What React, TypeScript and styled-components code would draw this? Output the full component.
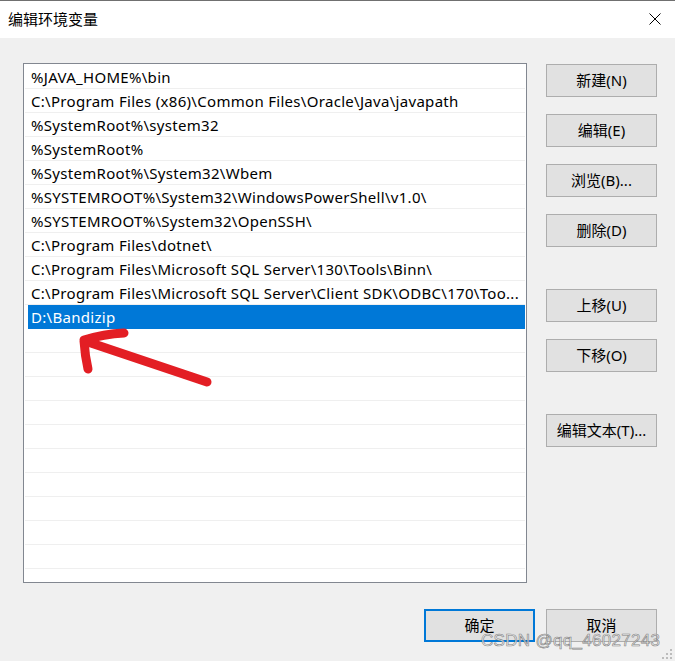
import React from "react";
import styled, { createGlobalStyle } from "styled-components";

const GlobalStyle = createGlobalStyle`
  html, body { margin: 0; padding: 0; background: #f0f0f0; }
  * { box-sizing: border-box; }
`;

const FONT = `"Noto Sans", "Noto Sans CJK SC", sans-serif`;

const Window = styled.div`
  position: relative;
  width: 675px;
  height: 661px;
  overflow: hidden;
  background: #f0f0f0;
  border-top: 1px solid #707070;
  font-family: ${FONT};
  font-size: 15px;
  color: #000;
`;

const TitleBar = styled.div`
  height: 37px;
  background: #fff;
  display: flex;
  align-items: center;
  justify-content: space-between;
  padding: 0 14px 0 8px;
`;

const Title = styled.div`
  font-size: 15px;
  line-height: 1;
  padding-bottom: 1px;
`;

const CloseIcon = styled.svg`
  width: 12px;
  height: 12px;
  margin-bottom: 1px;
`;

const Body = styled.div`
  padding: 25px 18px 0 23px;
`;

const Main = styled.div`
  display: flex;
  gap: 19px;
`;

const ListBox = styled.div`
  width: 504px;
  height: 520px;
  background: #fff;
  border: 1px solid #828790;
  padding: 1px;
  overflow: hidden;
`;

const Row = styled.div<{ $selected?: boolean }>`
  height: 24px;
  border-bottom: 1px solid #efefef;
  display: flex;
  align-items: center;
  white-space: nowrap;
  overflow: hidden;
  letter-spacing: 0.3px;
  padding-top: 2px;
  padding-left: ${(p) => (p.$selected ? "3px" : "6px")};
  margin-left: ${(p) => (p.$selected ? "3px" : "0")};
  background: ${(p) => (p.$selected ? "#0078d7" : "transparent")};
  color: ${(p) => (p.$selected ? "#fff" : "#000")};
  border-bottom-color: ${(p) => (p.$selected ? "#0078d7" : "#efefef")};
  line-height: 1;
`;

const ButtonColumn = styled.div`
  display: flex;
  flex-direction: column;
  gap: 42px;
  padding-top: 1px;
`;

const ButtonGroup = styled.div`
  display: flex;
  flex-direction: column;
  gap: 17px;
`;

const Button = styled.button<{ $default?: boolean }>`
  width: 111px;
  height: 33px;
  background: #e1e1e1;
  border: ${(p) => (p.$default ? "2px solid #0078d7" : "1px solid #adadad")};
  font-family: ${FONT};
  font-size: 15px;
  color: #000;
  padding: 0;
  margin: 0;
  display: flex;
  align-items: center;
  justify-content: center;
  line-height: 1;
`;

const Footer = styled.div`
  display: flex;
  justify-content: flex-end;
  gap: 11px;
  margin-top: 26px;
`;

const Watermark = styled.div`
  position: absolute;
  left: 481px;
  top: 630px;
  font-family: "Liberation Sans", sans-serif;
  font-size: 17px;
  color: rgba(235, 235, 235, 0.85);
  -webkit-text-stroke: 0.6px rgba(110, 110, 110, 0.85);
  white-space: nowrap;
  letter-spacing: 0.3px;
`;

const ArrowOverlay = styled.svg`
  position: absolute;
  left: 0;
  top: 0;
  pointer-events: none;
`;

const Grip = styled.svg`
  position: absolute;
  right: 2px;
  bottom: 1px;
`;

const paths = [
  "%JAVA_HOME%\\bin",
  "C:\\Program Files (x86)\\Common Files\\Oracle\\Java\\javapath",
  "%SystemRoot%\\system32",
  "%SystemRoot%",
  "%SystemRoot%\\System32\\Wbem",
  "%SYSTEMROOT%\\System32\\WindowsPowerShell\\v1.0\\",
  "%SYSTEMROOT%\\System32\\OpenSSH\\",
  "C:\\Program Files\\dotnet\\",
  "C:\\Program Files\\Microsoft SQL Server\\130\\Tools\\Binn\\",
  "C:\\Program Files\\Microsoft SQL Server\\Client SDK\\ODBC\\170\\Too...",
  "D:\\Bandizip",
];

const TOTAL_ROWS = 22;

export default function App() {
  const rows = Array.from({ length: TOTAL_ROWS }, (_, i) => paths[i] ?? "");
  return (
    <>
      <GlobalStyle />
      <Window>
        <TitleBar>
          <Title>编辑环境变量</Title>
          <CloseIcon viewBox="0 0 12 12">
            <path d="M0.5 0.5 L11.5 11.5 M11.5 0.5 L0.5 11.5" stroke="#000" strokeWidth="1" fill="none" />
          </CloseIcon>
        </TitleBar>
        <Body>
          <Main>
            <ListBox>
              {rows.map((t, i) => (
                <Row key={i} $selected={i === 10}>
                  {t}
                </Row>
              ))}
            </ListBox>
            <ButtonColumn>
              <ButtonGroup>
                <Button>新建(N)</Button>
                <Button>编辑(E)</Button>
                <Button>浏览(B)...</Button>
                <Button>删除(D)</Button>
              </ButtonGroup>
              <ButtonGroup>
                <Button>上移(U)</Button>
                <Button>下移(O)</Button>
              </ButtonGroup>
              <ButtonGroup>
                <Button>编辑文本(T)...</Button>
              </ButtonGroup>
            </ButtonColumn>
          </Main>
          <Footer>
            <Button $default>确定</Button>
            <Button>取消</Button>
          </Footer>
        </Body>
        <ArrowOverlay width="675" height="661" viewBox="0 0 675 661">
          <path
            d="M207 381 L85 340 M84 339 Q104 333 124 332 M84 340 Q85 355 88 368"
            stroke="#e31e24"
            strokeWidth="9"
            strokeLinecap="round"
            strokeLinejoin="round"
            fill="none"
          />
        </ArrowOverlay>
        <Watermark>CSDN @qq_46027243</Watermark>
        <Grip width="12" height="12" viewBox="0 0 12 12">
          {[
            [9, 1],
            [5, 5],
            [9, 5],
            [1, 9],
            [5, 9],
            [9, 9],
          ].map(([x, y], i) => (
            <rect key={i} x={x} y={y} width="2" height="2" fill="#bcbcbc" />
          ))}
        </Grip>
      </Window>
    </>
  );
}
